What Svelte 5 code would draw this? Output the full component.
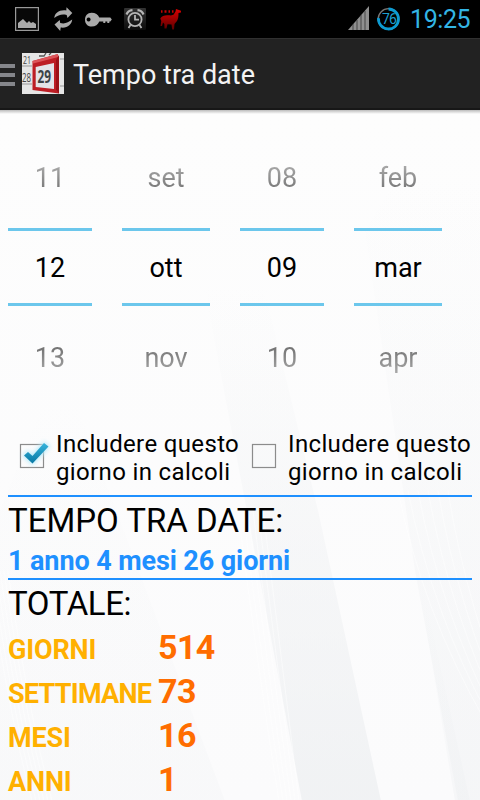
<script lang="ts">
  type Picker = { before: string; value: string; after: string }

  const pickers: Picker[] = [
    { before: '11', value: '12', after: '13' },
    { before: 'set', value: 'ott', after: 'nov' },
    { before: '08', value: '09', after: '10' },
    { before: 'feb', value: 'mar', after: 'apr' },
  ]

  const totals = [
    { label: 'GIORNI', value: 514 },
    { label: 'SETTIMANE', value: 73 },
    { label: 'MESI', value: 16 },
    { label: 'ANNI', value: 1 },
  ]

  let included = $state([true, false])
</script>

<div class="screen">
  <header class="status">
    <svg class="notifications" width="190" height="38" viewBox="0 0 190 38" aria-hidden="true">
      <!-- picture -->
      <rect x="15.6" y="7.6" width="22.8" height="22.8" fill="#080808" stroke="#999" stroke-width="1.2" />
      <path d="M18 28v-5l5-4 4 4 2-2 2 2 2-1 3 2v4z" fill="#aaa" />
      <!-- sync -->
      <path d="M54.300 18c.5-5 5-8.500 12-7.500l.2-3.200 5.800 5.700-4.800 5-.8-3c-5-1.200-8.400 0-12.400 3z" fill="#aaa" />
      <path d="M72.200 19.500c-.5 5-5 9-11.500 8l-.5 3.500-5.700-6.500 5.200-4.500.5 3c5 1.200 8-.5 12-3.500z" fill="#aaa" />
      <!-- key -->
      <path fill-rule="evenodd" d="M91.500 12.800c4 0 6.500 2 7.800 4.700h11l1.500 2-1.500 2h-1v1.500h-2v-1.500h-2v1.500h-2v-1.500h-4c-1.300 3-3.800 5-7.800 5-4 0-6.500-3-6.500-6.800s2.500-6.900 6.500-6.900zM88.600 17.500a2 2 0 1 0 .01 0z" fill="#aaa" />
      <!-- alarm clock -->
      <defs>
        <linearGradient id="alarm" x1="0" y1="0" x2="0" y2="1">
          <stop offset="0" stop-color="#333" />
          <stop offset="1" stop-color="#0c0c0c" />
        </linearGradient>
        <linearGradient id="llama" x1="0" y1="0" x2="0" y2="1">
          <stop offset="0" stop-color="#d80000" />
          <stop offset="1" stop-color="#5c0000" />
        </linearGradient>
      </defs>
      <rect x="124" y="8" width="22" height="22" rx="1" fill="url(#alarm)" />
      <g fill="none" stroke="#b5b5b5" stroke-width="1.800">
        <circle cx="135" cy="19.500" r="6.600" />
        <path d="M135 15v4.700h4M130.500 25l-2 3M139.500 25l2 3" />
        <path d="M126.500 14.500c1-2.700 3-4 6-4.300M143.500 14.500c-1-2.700-3-4-6-4.300" stroke-width="2.200" />
      </g>
      <!-- llama -->
      <path d="M160.300 18.500c1.500-3 5-3.500 8.500-3.200 2.500.2 4.200.2 5.200-1.300l1.500-2.500.5-2.500 1.500.5 3.500 1.300v1.700l-2.500.5c0 3-.2 6-1.500 8l-2.500 3-.5 5.500h-1.800l-.7-5-4-.3-1 4.300h-2l-.2-4.500-1.300-1.500-1 3.500h-1.500l.8-5z" fill="url(#llama)" />
      <path d="M161 11.500h1.500M164.500 11.500h2M168.500 11.500h1.500M172 11.500h1.500" stroke="#c80000" stroke-width="2.300" />
    </svg>
    <svg class="system" width="56" height="38" viewBox="0 0 56 38" aria-hidden="true">
      <path d="M0 30L21 6v24z" fill="#8f8f8f" />
      <path d="M5 24v6M9 20v10M13 15v15M17 11v19" stroke="#333" stroke-width=".8" />
      <circle cx="40.500" cy="19" r="10.300" fill="none" stroke="#777" stroke-width="1.300" />
      <path d="M40.500 9A10 10 0 1 1 30.500 18" fill="none" stroke="#0c9bd2" stroke-width="2.800" />
      <text x="41" y="24" text-anchor="middle">76</text>
    </svg>
    <time>19:25</time>
  </header>

  <nav class="bar">
    <span class="drawer"></span>
    <svg class="logo" width="42" height="41" viewBox="0 0 42 41" aria-hidden="true">
      <rect width="42" height="41" fill="#e6e6e6" />
      <path d="M0 13h10M0 31h10M38 6h4M38 33h4" stroke="#999" stroke-width="1" />
      <text x="1" y="11" font-size="11" textLength="8" lengthAdjust="spacingAndGlyphs">21</text>
      <path d="M17 3h5l2-3M27 2l2-2" fill="none" stroke="#555" stroke-width="1.300" />
      <text x="0" y="29" font-size="13" textLength="9" lengthAdjust="spacingAndGlyphs">28</text>
      <path d="M10.500 8L36 1l1 39.500L10.500 37z" fill="#bd1e25" />
      <path d="M10.500 8L36 1l.2 3-25 6.500z" fill="#dc555a" />
      <path d="M34 7l3-5v38.500l-3-4z" fill="#9c1118" />
      <path d="M13.700 14L32 10v26L13.700 34z" fill="#e4e4e8" />
      <text class="day" x="15.500" y="29.500" font-size="17" textLength="13.500" lengthAdjust="spacingAndGlyphs">29</text>
    </svg>
    <h1>Tempo tra date</h1>
  </nav>

  <main>
    <svg class="backdrop" viewBox="0 0 480 690" preserveAspectRatio="none" aria-hidden="true">
      <defs>
        <linearGradient id="shade" x1="0" y1="0" x2="0" y2="1">
          <stop offset="0.1" stop-color="#edeff1" stop-opacity="0" />
          <stop offset="1" stop-color="#edeff1" stop-opacity=".75" />
        </linearGradient>
      </defs>
      <path d="M205 180L302 690h79L318 400 250 120z" fill="url(#shade)" />
      <path d="M365 120L415 460 458 690h22V0h-40z" fill="url(#shade)" opacity=".6" />
      <path d="M418 470l37 220h15l-42-190z" fill="url(#shade)" opacity=".5" />
      <path d="M60 250L225 690H0V400z" fill="url(#shade)" opacity=".3" />
      <g fill="none" stroke="#fff" stroke-width=".7" opacity=".7">
        {#each [0, 1, 2, 3, 4, 5] as n}
          <path d={`M${238 + n * 5} 400Q${258 + n * 5} 560 ${279 + n * 4} 690`} />
          <path d={`M${398 + n * 10} 380Q${422 + n * 9} 500 ${485 + n * 6} 610`} />
          <path d={`M${-12 + n * 4} 460Q${8 + n * 4} 600 ${32 + n * 4} 690`} />
        {/each}
      </g>
    </svg>

    <section class="pickers">
      {#each pickers as picker}
        <div class="picker">
          <span class="before">{picker.before}</span>
          <span class="value">{picker.value}</span>
          <span class="after">{picker.after}</span>
        </div>
      {/each}
    </section>

    <section class="options">
      {#each included as checked, i}
        <button class="option" role="checkbox" aria-checked={checked} onclick={() => (included[i] = !included[i])}>
          <svg width="36" height="36" viewBox="0 0 36 36" aria-hidden="true">
            <defs>
              <linearGradient id="tick" x1="0" y1="0" x2="0" y2="1">
                <stop offset="0" stop-color="#35b4dc" />
                <stop offset="1" stop-color="#0878a4" />
              </linearGradient>
            </defs>
            <rect x="7.500" y="7.500" width="23" height="23" fill="none" stroke="#8c8c8c" stroke-width="1.200" />
            {#if checked}
              <path class="glow" d="M11 18.500l4-3.500 4.500 4L31 6l4.500 3.500L19.500 26.500z" />
              <path d="M11 18.500l4-3.500 4.500 4L31 6l4.500 3.500L19.500 26.500z" fill="url(#tick)" />
            {/if}
          </svg>
          <span>Includere questo<br />giorno in calcoli</span>
        </button>
      {/each}
    </section>

    <section class="between">
      <h2>TEMPO TRA DATE:</h2>
      <p>1 anno 4 mesi 26 giorni</p>
    </section>

    <section class="totals">
      <h2>TOTALE:</h2>
      <dl>
        {#each totals as total}
          <dt class:long={total.label.length > 6}>{total.label}</dt>
          <dd>{total.value}</dd>
        {/each}
      </dl>
    </section>
  </main>
</div>

<style>
  :global(body) {
    overflow: hidden;
    background: #fcfcfd;
  }

  .screen {
    display: flex;
    flex-direction: column;
    width: 480px;
    height: 800px;
    overflow: hidden;
    font-family: Roboto, 'Noto Sans', sans-serif;
    color: #000;
  }

  h1,
  h2,
  p,
  dl,
  dd {
    margin: 0;
    font-weight: 400;
    white-space: nowrap;
  }

  .status {
    display: flex;
    flex: none;
    height: 38px;
    background: #000;
  }

  .system {
    margin-left: 158px;
  }

  .system text {
    fill: #1c9fd0;
    font-size: 14px;
    letter-spacing: -0.8px;
  }

  time {
    margin-left: 6px;
    color: #33b5e5;
    font-size: 25px;
    line-height: 40px;
    letter-spacing: -0.4px;
  }

  .bar {
    display: flex;
    flex: none;
    align-items: center;
    box-sizing: border-box;
    height: 72px;
    border-top: 1px solid #303030;
    border-bottom: 2px solid #171717;
    background: #222;
    color: #f3f3f3;
  }

  .drawer {
    width: 15px;
    height: 22px;
    margin: 3px 7px 0 0;
    background: repeating-linear-gradient(#85868b 0 4px, transparent 4px 9px);
  }

  .logo {
    font-family: 'Open Sans', sans-serif;
    fill: #444;
  }

  .logo .day {
    font-weight: 700;
    fill: #3d4347;
  }

  h1 {
    margin: 2px 0 0 9px;
    font-size: 27px;
    line-height: 40px;
  }

  main {
    position: relative;
    flex: 1;
    padding: 0 8px;
    background: linear-gradient(#fdfdfd, #fbfbfc);
  }

  main::before {
    content: '';
    position: absolute;
    inset: 0 0 auto;
    height: 4px;
    background: linear-gradient(#bbb, transparent);
  }

  .backdrop {
    position: absolute;
    inset: 0;
    z-index: 0;
    width: 100%;
    height: 100%;
  }

  section {
    position: relative;
  }

  .pickers {
    display: grid;
    grid-template-columns: 84px 88px 84px 88px;
    gap: 30px;
    height: 318px;
    padding-top: 18px;
    box-sizing: border-box;
  }

  .picker {
    display: flex;
    flex-direction: column;
    font-size: 27px;
    text-align: center;
  }

  .before {
    line-height: 100px;
    color: transparent;
    background: linear-gradient(#b8b8b8 30px, #666 70px) text;
  }

  .value {
    border-top: 3px solid #6cc7ec;
    border-bottom: 3px solid #6cc7ec;
    line-height: 75px;
    height: 72px;
  }

  .after {
    line-height: 104px;
    color: transparent;
    background: linear-gradient(#666 35px, #b8b8b8 75px) text;
  }

  .options {
    display: grid;
    grid-template-columns: 232px 232px;
    height: 67px;
    border-bottom: 2px solid #1e90ff;
  }

  .option {
    display: flex;
    align-items: flex-start;
    padding: 2px 0 0 5px;
    border: 0;
    background: none;
    color: #000;
    font: 24px/28px Roboto, sans-serif;
    letter-spacing: 0.35px;
    text-align: left;
    white-space: nowrap;
  }

  .option svg {
    flex: none;
    margin: 7px 2px 0 0;
    overflow: visible;
  }

  .option span {
    margin-left: 5px;
  }

  .glow {
    fill: #8edcf5;
    stroke: #c5eefa;
    stroke-width: 3;
    filter: blur(2px);
  }

  h2 {
    height: 48px;
    font-size: 33px;
    line-height: 48px;
  }

  .between {
    border-bottom: 2px solid #1e90ff;
  }

  .between p {
    height: 33px;
    color: #1e90ff;
    font-size: 27px;
    font-weight: 700;
    line-height: 33px;
    letter-spacing: -0.1px;
  }

  .totals h2 {
    height: 45px;
    letter-spacing: -0.4px;
  }

  dl {
    display: grid;
    grid-template-columns: 150px 1fr;
    grid-auto-rows: 44px;
    align-items: baseline;
    font-weight: 700;
    line-height: 44px;
  }

  dt {
    color: #ffb000;
    font-size: 27px;
    letter-spacing: -0.15px;
  }

  dt.long {
    letter-spacing: -0.75px;
  }

  dd {
    color: #ff6d00;
    font-size: 34px;
    font-weight: 700;
    letter-spacing: -0.6px;
  }
</style>
